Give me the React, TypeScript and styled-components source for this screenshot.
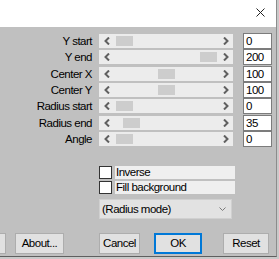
import styled, { createGlobalStyle } from "styled-components";

const GlobalStyle = createGlobalStyle`
  html, body {
    margin: 0;
    padding: 0;
    background: #c9c9c9;
  }
  body {
    font-family: "Liberation Sans", Arial, sans-serif;
    font-size: 11.5px;
    letter-spacing: -0.5px;
    color: #000;
  }
`;

const Window = styled.div`
  width: 276px;
  border-right: 1px solid #8c8c8c;
  border-bottom: 1px solid #5f5f5f;
  background: #c0c0c0;
  overflow: hidden;
`;

const TitleBar = styled.div`
  height: 27px;
  background: #fff;
  display: flex;
  justify-content: flex-end;
  align-items: flex-start;
  padding-right: 11px;
  box-sizing: border-box;
`;

const CloseIcon = styled.svg`
  margin-top: 8px;
`;

const Body = styled.div`
  display: flex;
  flex-direction: column;
  padding: 7px 0 2px 0;
`;

const Rows = styled.div`
  display: flex;
  flex-direction: column;
  gap: 2.33px;
`;

const Row = styled.div`
  display: flex;
  align-items: center;
  height: 14px;
`;

const Label = styled.div`
  width: 92px;
  text-align: right;
  line-height: 14px;
  white-space: nowrap;
`;

const Track = styled.div`
  position: relative;
  margin-left: 7px;
  width: 134px;
  height: 14px;
  background: #ececec;
  display: flex;
  align-items: center;
  justify-content: space-between;
  padding: 0 4px 0 5px;
  box-sizing: border-box;
`;

const Thumb = styled.div`
  position: absolute;
  top: 2px;
  bottom: 2px;
  width: 17px;
  background: #cdcdcd;
`;

const ValueBox = styled.div`
  margin-left: 10px;
  width: 29px;
  height: 16px;
  box-sizing: border-box;
  background: #fff;
  border: 1px solid #7c7c7c;
  padding-left: 2px;
  line-height: 14px;
`;

const Options = styled.div`
  display: flex;
  flex-direction: column;
  gap: 2px;
  margin: 20px 0 0 99px;
`;

const CheckRow = styled.label`
  display: flex;
  align-items: center;
  height: 13px;
`;

const Box = styled.span`
  width: 13px;
  height: 13px;
  box-sizing: border-box;
  background: #fff;
  border: 1px solid #333;
`;

const CheckText = styled.span`
  margin-left: 3px;
  width: 119px;
  height: 13px;
  line-height: 13px;
  padding-left: 1px;
  background: #efefef;
`;

const Combo = styled.div`
  margin: 5px 0 0 99px;
  width: 133px;
  height: 20px;
  box-sizing: border-box;
  background: #e2e2e2;
  border: 1px solid #d0d0d0;
  display: flex;
  align-items: center;
  justify-content: space-between;
  padding: 0 5px 0 2px;
`;

const ButtonBar = styled.div`
  display: flex;
  margin-top: 14px;
`;

const Button = styled.div<{ $w: number; $ml: number; $primary?: boolean }>`
  width: ${(p) => p.$w}px;
  margin-left: ${(p) => p.$ml}px;
  height: 21px;
  box-sizing: border-box;
  background: #e1e1e1;
  border: ${(p) => (p.$primary ? "2px solid #0078d7" : "1px solid #adadad")};
  display: flex;
  align-items: center;
  justify-content: center;
  flex-shrink: 0;
`;

const Arrow = ({ dir }: { dir: "l" | "r" }) => (
  <svg width="6" height="8" viewBox="0 0 6 8">
    <polyline
      points={dir === "l" ? "5,0.5 1.5,4 5,7.5" : "1,0.5 4.5,4 1,7.5"}
      fill="none"
      stroke="#606060"
      strokeWidth="2"
    />
  </svg>
);

const sliders = [
  { label: "Y start", value: 0, max: 200 },
  { label: "Y end", value: 200, max: 200 },
  { label: "Center X", value: 100, max: 200 },
  { label: "Center Y", value: 100, max: 200 },
  { label: "Radius start", value: 0, max: 420 },
  { label: "Radius end", value: 35, max: 420 },
  { label: "Angle", value: 0, max: 360 },
];

export default function App() {
  return (
    <>
      <GlobalStyle />
      <Window>
        <TitleBar>
          <CloseIcon width="9" height="9" viewBox="0 0 9 9">
            <path d="M0.5 0.5 L8.5 8.5 M8.5 0.5 L0.5 8.5" stroke="#222" strokeWidth="1" />
          </CloseIcon>
        </TitleBar>
        <Body>
          <Rows>
            {sliders.map((s) => (
              <Row key={s.label}>
                <Label>{s.label}</Label>
                <Track>
                  <Arrow dir="l" />
                  <Thumb style={{ left: 17 + (84 * s.value) / s.max }} />
                  <Arrow dir="r" />
                </Track>
                <ValueBox>{s.value}</ValueBox>
              </Row>
            ))}
          </Rows>
          <Options>
            <CheckRow>
              <Box />
              <CheckText>Inverse</CheckText>
            </CheckRow>
            <CheckRow>
              <Box />
              <CheckText>Fill background</CheckText>
            </CheckRow>
          </Options>
          <Combo>
            <span>(Radius mode)</span>
            <svg width="7" height="4" viewBox="0 0 7 4">
              <polyline points="0.5,0.5 3.5,3.5 6.5,0.5" fill="none" stroke="#7a7a7a" strokeWidth="1" />
            </svg>
          </Combo>
          <ButtonBar>
            <Button $w={50} $ml={-44} />
            <Button $w={49} $ml={9}>About...</Button>
            <Button $w={41} $ml={35}>Cancel</Button>
            <Button $w={48} $ml={14} $primary>OK</Button>
            <Button $w={46} $ml={21}>Reset</Button>
          </ButtonBar>
        </Body>
      </Window>
    </>
  );
}
